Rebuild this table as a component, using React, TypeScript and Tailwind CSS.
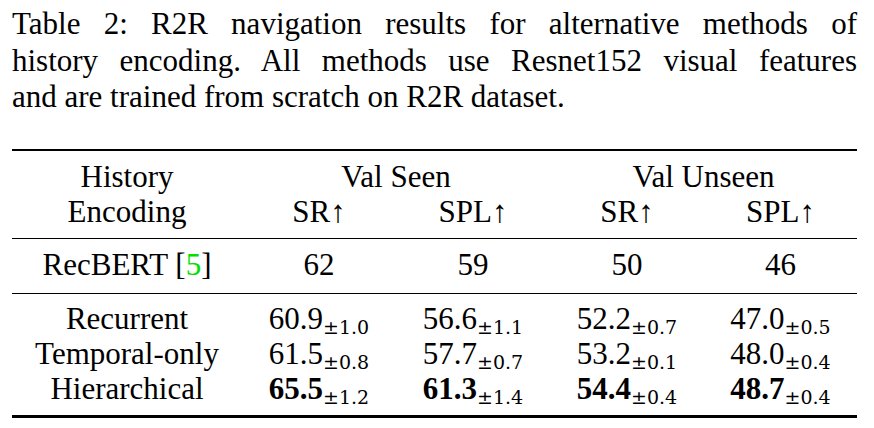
const rows = [
  { name: "Recurrent", cells: [["60.9", "1.0"], ["56.6", "1.1"], ["52.2", "0.7"], ["47.0", "0.5"]], bold: false },
  { name: "Temporal-only", cells: [["61.5", "0.8"], ["57.7", "0.7"], ["53.2", "0.1"], ["48.0", "0.4"]], bold: false },
  { name: "Hierarchical", cells: [["65.5", "1.2"], ["61.3", "1.4"], ["54.4", "0.4"], ["48.7", "0.4"]], bold: true },
];

const caption = [
  "Table 2: R2R navigation results for alternative methods of",
  "history encoding. All methods use Resnet152 visual features",
];

const cols = "grid grid-cols-[230px_154px_154px_154px_153px] text-center";

function Stat({ value, std, bold }: { value: string; std: string; bold: boolean }) {
  return (
    <span className="whitespace-nowrap">
      <span className={bold ? "font-bold" : ""}>{value}</span>
      <span className="relative top-[5px] font-['DejaVu_Serif',serif] text-[19px] leading-none">±{std}</span>
    </span>
  );
}

export default function App() {
  return (
    <div className="w-[874px] h-[428px] bg-white text-black font-['Liberation_Serif','Times_New_Roman',serif] overflow-hidden">
      <div className="mx-[12px] w-[845px] pt-[6px] text-[31px] leading-[36.5px]">
        {caption.map((line) => (
          <div key={line} className="text-justify [text-align-last:justify]">
            {line}
          </div>
        ))}
        <div>and are trained from scratch on R2R dataset.</div>
      </div>

      <div className="ml-[12px] mt-[33px] w-[845px] text-[31px] leading-[35px]">
        <div className="h-[2.5px] bg-black" />

        <div className={`${cols} mt-[7.5px]`}>
          <div>History</div>
          <div className="col-span-2">Val Seen</div>
          <div className="col-span-2">Val Unseen</div>
          <div>Encoding</div>
          <div>SR↑</div>
          <div>SPL↑</div>
          <div>SR↑</div>
          <div>SPL↑</div>
        </div>

        <div className="mt-[9px] h-[1.5px] bg-black" />

        <div className={`${cols} mt-[7.5px]`}>
          <div className="whitespace-nowrap">
            RecBERT [<span className="text-[#00e000]">5</span>]
          </div>
          <div>62</div>
          <div>59</div>
          <div>50</div>
          <div>46</div>
        </div>

        <div className="mt-[11px] h-[1.5px] bg-black" />

        <div className={`${cols} mt-[6.5px]`}>
          {rows.map((r) => (
            <div key={r.name} className="contents">
              <div className="whitespace-nowrap">{r.name}</div>
              {r.cells.map(([v, s], i) => (
                <div key={i}>
                  <Stat value={v} std={s} bold={r.bold} />
                </div>
              ))}
            </div>
          ))}
        </div>

        <div className="mt-[9.5px] h-[2.5px] bg-black" />
      </div>
    </div>
  );
}
